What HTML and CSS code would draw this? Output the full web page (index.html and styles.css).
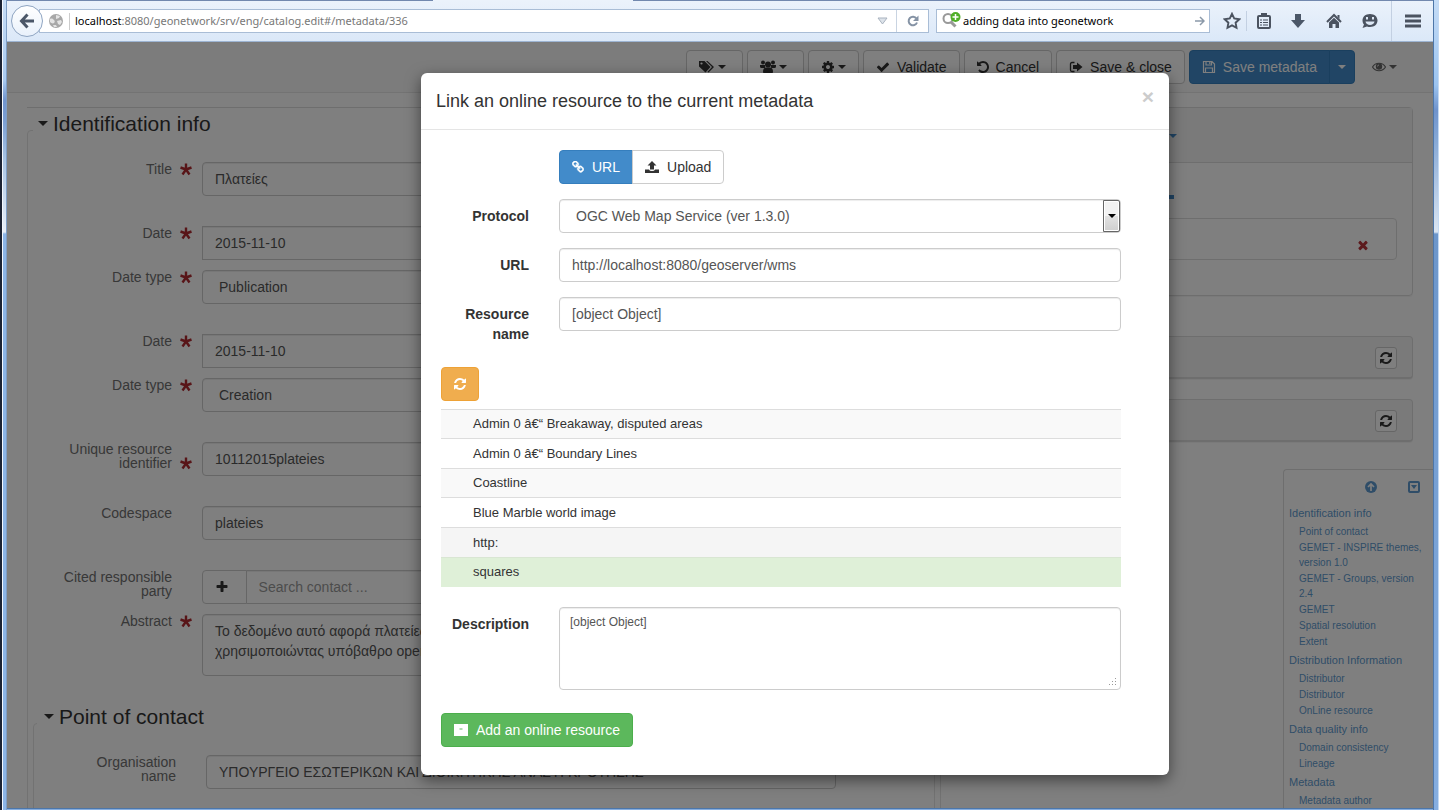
FILE: index.html
```html
<!DOCTYPE html>
<html lang="en">
<head>
<meta charset="utf-8">
<title>Edit metadata</title>
<link rel="stylesheet" href="styles.css">
</head>
<body>
<svg class="sprite" aria-hidden="true">
  <symbol id="i-check" viewBox="0 0 1792 1792"><path d="M1671 566q0 40-28 68l-724 724-136 136q-28 28-68 28t-68-28l-136-136-362-362q-28-28-28-68t28-68l136-136q28-28 68-28t68 28l294 295 656-657q28-28 68-28t68 28l136 136q28 28 28 68z"/></symbol>
  <symbol id="i-times" viewBox="0 0 1792 1792"><path d="M1490 1322q0 40-28 68l-136 136q-28 28-68 28t-68-28l-294-294-294 294q-28 28-68 28t-68-28l-136-136q-28-28-28-68t28-68l294-294-294-294q-28-28-28-68t28-68l136-136q28-28 68-28t68 28l294 294 294-294q28-28 68-28t68 28l136 136q28 28 28 68t-28 68l-294 294 294 294q28 28 28 68z"/></symbol>
  <symbol id="i-refresh" viewBox="128 128 1536 1536"><path d="M1639 1056q0 5-1 7-64 268-268 434.5t-478 166.5q-146 0-282.5-55t-243.5-157l-129 129q-19 19-45 19t-45-19-19-45v-448q0-26 19-45t45-19h448q26 0 45 19t19 45-19 45l-137 137q71 66 161 102t187 36q134 0 250-65t186-179q11-17 53-117 8-23 30-23h192q13 0 22.5 9.5t9.5 22.5zm25-800v448q0 26-19 45t-45 19h-448q-26 0-45-19t-19-45 19-45l138-138q-148-137-349-137-134 0-250 65t-186 179q-11 17-53 117-8 23-30 23h-199q-13 0-22.5-9.5t-9.5-22.5v-7q65-268 270-434.5t480-166.5q146 0 284 55.5t245 156.5l130-129q19-19 45-19t45 19 19 45z"/></symbol>
  <symbol id="i-undo" viewBox="128 128 1536 1536"><path d="M1664 896q0 156-61 298t-164 245-245 164-298 61q-172 0-327-72.5t-264-204.5q-7-10-6.5-22.5t8.5-20.5l137-138q10-9 25-9 16 2 23 12 73 95 179 147t225 52q104 0 198.500-40.500t163.500-109.500 109.500-163.500 40.500-198.500-40.500-198.500-109.500-163.500-163.500-109.500-198.500-40.500q-98 0-188 35.500t-160 101.500l137 138q31 30 14 69-17 40-59 40h-448q-26 0-45-19t-19-45v-448q0-42 40-59 39-17 69 14l130 129q107-101 244.500-156.500t284.500-55.500q156 0 298 61t245 164 164 245 61 298z"/></symbol>
  <symbol id="i-plus" viewBox="0 0 1792 1792"><path d="M1600 736v192q0 40-28 68t-68 28h-416v416q0 40-28 68t-68 28h-192q-40 0-68-28t-28-68v-416h-416q-40 0-68-28t-28-68v-192q0-40 28-68t68-28h416v-416q0-40 28-68t68-28h192q40 0 68 28t28 68v416h416q40 0 68 28t28 68z"/></symbol>
  <symbol id="i-star" viewBox="0 0 14 14"><path d="M7 7.500V1.500M7 7.500 1.500 5.500M7 7.500l5.500-2M7 7.500l-3.500 5M7 7.500l3.500 5" fill="none" stroke="currentColor" stroke-width="2.400"/></symbol>
  <symbol id="i-cog" viewBox="0 0 1792 1792"><path d="M1152 896q0-106-75-181t-181-75-181 75-75 181 75 181 181 75 181-75 75-181zm512-109v222q0 12-8 23t-20 13l-185 28q-19 54-39 91 35 50 107 138 10 12 10 25t-9 23q-27 37-99 108t-94 71q-12 0-26-9l-138-108q-44 23-91 38-16 136-29 186-7 28-36 28h-222q-14 0-24.500-8.500t-11.500-21.500l-28-184q-49-16-90-37l-141 107q-10 9-25 9-14 0-25-11-126-114-165-168-7-10-7-23 0-12 8-23 15-21 51-66.500t54-70.500q-27-50-41-99l-183-27q-13-2-21-12.500t-8-23.500v-222q0-12 8-23t19-13l186-28q14-46 39-92-40-57-107-138-10-12-10-24 0-10 9-23 26-36 98.500-107.500t94.500-71.500q13 0 26 10l138 107q44-23 91-38 16-136 29-186 7-28 36-28h222q14 0 24.500 8.500t11.500 21.500l28 184q49 16 90 37l142-107q9-9 24-9 13 0 25 10 129 119 165 170 7 8 7 22 0 12-8 23-15 21-51 66.500t-54 70.500q26 50 41 98l183 28q13 2 21 12.500t8 23.500z"/></symbol>
  <symbol id="i-link" viewBox="64 64 1664 1664"><path d="M1520 1216q0-40-28-68l-208-208q-28-28-68-28-42 0-72 32 3 3 19 18.500t21.500 21.500 15 19 13 25.500 3.500 27.500q0 40-28 68t-68 28q-15 0-27.500-3.500t-25.500-13-19-15-21.500-21.500-18.500-19q-33 31-33 73 0 40 28 68l206 207q27 27 68 27 40 0 68-26l147-146q28-28 28-67zm-703-705q0-40-28-68l-206-207q-28-28-68-28-39 0-68 27l-147 146q-28 28-28 67 0 40 28 68l208 208q27 27 68 27 42 0 72-31-3-3-19-18.500t-21.500-21.500-15-19-13-25.500-3.500-27.500q0-40 28-68t68-28q15 0 27.500 3.500t25.500 13 19 15 21.500 21.500 18.500 19q33-31 33-73zm895 705q0 120-85 203l-147 146q-83 83-203 83-121 0-204-85l-206-207q-83-83-83-203 0-123 88-209l-88-88q-86 88-208 88-120 0-204-84l-208-208q-84-84-84-204t85-203l147-146q83-83 203-83 121 0 204 85l206 207q83 83 83 203 0 123-88 209l88 88q86-88 208-88 120 0 204 84l208 208q84 84 84 204z" stroke="currentColor" stroke-width="60"/></symbol>
</svg>

<div class="window">
  <div class="frame frame-left"></div>

  <header class="chrome">
    <div class="tabline"><span class="tab"></span></div>
    <button class="back" aria-label="Back">
      <svg width="16" height="16" viewBox="0 0 16 16" fill="none" stroke="#4b5768" stroke-width="3"><path d="M8.500 1.500 2.500 8l6 6.500M3 8h12"/></svg>
    </button>
    <div class="address">
      <svg class="globe" width="14" height="14" viewBox="0 0 14 14"><circle cx="7" cy="7" r="7" fill="#a8a8a8"/><path d="M1 5c2-1 3 0 4 1s1 2 0 3-3 0-4-1zM7 1l4 1-1 2-3 1zM8 7l4-1 1 2-2 3-2-1zM4 11l3 0 1 2-3 0z" fill="#e4e4e4"/></svg>
      <span class="rule"></span>
      <span class="url"><b>localhost</b>:8080/geonetwork/srv/eng/catalog.edit#/metadata/336</span>
      <svg width="11" height="8" viewBox="0 0 11 8"><path d="M1 1h9L5.500 7z" fill="#dde3ea" stroke="#a9b3bf"/></svg>
      <button class="reload" aria-label="Reload"><svg width="12" height="12" viewBox="0 0 12 12"><path d="M9.500 3.500A4.300 4.300 0 1 0 10 7.500" fill="none" stroke="#8593a5" stroke-width="2"/><path d="M6 6h5.500V.5z" fill="#8593a5"/></svg></button>
    </div>
    <div class="search">
      <svg width="19" height="18" viewBox="0 0 19 18"><circle cx="6" cy="6.500" r="4.500" fill="none" stroke="#999" stroke-width="2"/><path d="m9 10 4.500 4.500" stroke="#999" stroke-width="3"/><circle cx="13.500" cy="5" r="5" fill="#4fae27"/><path d="M13.500 2v6m-3-3h6" stroke="#fff" stroke-width="1.500"/></svg>
      <input type="text" aria-label="Search" value="adding data into geonetwork">
      <svg width="10" height="10" viewBox="0 0 10 10" fill="none" stroke="#8b99a9" stroke-width="1.500"><path d="M0 5h8M5 1l4 4-4 4"/></svg>
    </div>
    <nav class="tools" aria-label="Browser">
      <button aria-label="Bookmark"><svg width="18" height="18" viewBox="0 0 18 18"><path d="m9 1.800 2.200 4.700 5.100.7-3.700 3.500.9 5.100L9 13.300l-4.500 2.500.9-5.100L1.700 7.200l5.100-.7z" fill="none" stroke="#4b5360" stroke-width="1.900"/></svg></button>
      <button class="ruled" aria-label="Bookmarks list"><svg width="16" height="18" viewBox="0 0 16 18" fill="none" stroke="#4b5360" stroke-width="2"><rect x="2" y="4" width="12" height="12" rx="1"/><path d="M5 3h6" stroke-width="4"/><path d="M4 8h2m1 0h5M4 10.500h2m1 0h5M4 13h2m1 0h5" stroke-width="1.200"/></svg></button>
      <button aria-label="Downloads"><svg width="16" height="16" viewBox="0 0 16 16"><path d="M5 1h6v6h4l-7 8-7-8h4z" fill="#4b5768"/></svg></button>
      <button aria-label="Home"><svg width="16" height="16" viewBox="0 0 16 16"><path d="M1 9 8 2l7 7" fill="none" stroke="#4b5360" stroke-width="2"/><path d="M3 9.500 8 4.800l5 4.700V15H9.500v-4h-3v4H3zM11.500 2h2v4l-2-2z" fill="#4b5360"/></svg></button>
      <button aria-label="Chat"><svg width="18" height="16" viewBox="0 0 18 16"><path d="M9 1c4.500 0 7.500 2.800 7.500 6.500S13.500 14 9 14c-1 0-2 0-3-.5L1.500 15 3 11.500C2 10.500 1.500 9 1.500 7.500 1.500 3.800 4.500 1 9 1z" fill="#4b5360"/><path d="M6 4v2.500M12 4v2.500" stroke="#dde8f5" stroke-width="2"/><path d="M4.500 8.500h9c-.5 4.500-8.500 4.500-9 0z" fill="#dde8f5"/></svg></button>
      <button class="menu" aria-label="Menu"><svg width="16" height="14" viewBox="0 0 16 14"><path d="M0 2h16M0 7h16M0 12h16" stroke="#4b5360" stroke-width="3"/></svg></button>
    </nav>
  </header>

  <div class="frame frame-right"></div>

  <main class="viewport">
    <div class="toolbar">
      <button class="btn roomy" aria-label="Tags"><svg class="wide" viewBox="0 0 16 14"><path d="M0 1h5.500l6 6-5 5.500L0 6.500z"/><path d="M7 1h1.500l6.500 6-5.500 5.500-1-.8L13 7z"/><circle cx="2.500" cy="3.500" r="1.100" fill="#fff"/></svg><i class="caret"></i></button>
      <button class="btn roomy" aria-label="Groups"><svg class="wide" viewBox="0 0 16 14"><circle cx="3" cy="2.500" r="2"/><circle cx="13" cy="2.500" r="2"/><circle cx="8" cy="4.500" r="3"/><path d="M0 5h5l0 3H1.500Q0 8 0 6.500zM16 5h-5v3h3.500Q16 8 16 6.500zM3 12c0-3 1-4.500 3-4.500h4c2 0 3 1.500 3 4.500q0 2-2 2H5q-2 0-2-2z"/></svg><i class="caret"></i></button>
      <button class="btn" aria-label="Settings"><svg><use href="#i-cog"/></svg><i class="caret"></i></button>
      <button class="btn spaced"><svg><use href="#i-check"/></svg>Validate</button>
      <button class="btn spaced"><svg class="narrow"><use href="#i-undo"/></svg>Cancel</button>
      <button class="btn spaced"><svg viewBox="0 0 14 14"><path d="M5.500 2.500H3Q1.500 2.500 1.500 4v6Q1.500 11.500 3 11.500h2.500" fill="none" stroke="currentColor" stroke-width="1.300"/><path d="M4 5h4V2.500L13.500 7 8 11.500V9H4z"/></svg>Save &amp; close</button>
      <div class="group">
        <button class="btn primary spaced"><svg viewBox="0 0 14 14"><path fill="none" stroke="currentColor" stroke-width="1.200" d="M1.500 1.500h8.500l2.500 2.500v8.500h-11zM4 1.500V5h5.500V1.500M7.800 1.500V4M3.500 12.500V8h7v4.500"/></svg>Save metadata</button>
        <button class="btn primary split" aria-label="More save options"><i class="caret"></i></button>
      </div>
      <button class="btn bare" aria-label="View"><svg viewBox="0 0 14 14"><path d="M.5 7C3.500 2 10.500 2 13.500 7c-3 5-10 5-13 0z" fill="none" stroke="currentColor" stroke-width="1.200"/><circle cx="7" cy="6.500" r="3.200"/><path d="M5.500 6.500Q5.500 5 7 5" fill="none" stroke="#fff" stroke-width=".8"/></svg><i class="caret"></i></button>
    </div>

    <div class="page">
      <form class="editor">
        <fieldset>
          <legend><i class="caret big"></i>Identification info</legend>
          <div class="row"><label for="title">Title</label><svg class="req"><use href="#i-star"/></svg><input id="title" class="control" value="Πλατείες"></div>
          <div class="row apart"><label for="date1">Date</label><svg class="req"><use href="#i-star"/></svg><input id="date1" class="control square" value="2015-11-10"></div>
          <div class="row"><label for="type1">Date type</label><svg class="req"><use href="#i-star"/></svg><select id="type1" class="control"><option>Publication</option></select></div>
          <div class="row apart"><label for="date2">Date</label><svg class="req"><use href="#i-star"/></svg><input id="date2" class="control square" value="2015-11-10"></div>
          <div class="row"><label for="type2">Date type</label><svg class="req"><use href="#i-star"/></svg><select id="type2" class="control"><option>Creation</option></select></div>
          <div class="row apart"><label for="ident">Unique resource identifier</label><svg class="req second"><use href="#i-star"/></svg><input id="ident" class="control" value="10112015plateies"></div>
          <div class="row apart"><label for="space">Codespace</label><span></span><input id="space" class="control" value="plateies"></div>
          <div class="row apart"><label for="party">Cited responsible party</label><span></span><div class="addon"><button type="button" class="btn" aria-label="Add contact"><svg><use href="#i-plus"/></svg></button><input id="party" class="control" placeholder="Search contact ..."></div></div>
          <div class="row"><label for="abs">Abstract</label><svg class="req"><use href="#i-star"/></svg><textarea id="abs" class="control">Το δεδομένο αυτό αφορά πλατείες
χρησιμοποιώντας υπόβαθρο openstreetmap</textarea></div>
          <fieldset class="nested">
            <legend><i class="caret big"></i>Point of contact</legend>
            <div class="row"><label for="org">Organisation name</label><span></span><input id="org" class="control" value="ΥΠΟΥΡΓΕΙΟ ΕΣΩΤΕΡΙΚΩΝ ΚΑΙ ΔΙΟΙΚΗΤΙΚΗΣ ΑΝΑΣΥΓΚΡΟΤΗΣΗΣ"></div>
            <div class="row filler"></div>
          </fieldset>
        </fieldset>
      </form>

      <aside class="side">
        <section class="panel">
          <div class="panel-head"><i class="caret accent"></i></div>
          <div class="panel-body">
            <span class="dash"></span>
            <div class="resource"><button class="remove" aria-label="Remove"><svg><use href="#i-times"/></svg></button></div>
          </div>
        </section>
        <section class="panel slim"><button class="btn tiny" aria-label="Refresh"><svg class="narrow"><use href="#i-refresh"/></svg></button></section>
        <section class="panel slim"><button class="btn tiny" aria-label="Refresh"><svg class="narrow"><use href="#i-refresh"/></svg></button></section>
      </aside>
    </div>

    <nav class="toc" aria-label="Sections">
      <div class="toc-tools">
        <button aria-label="Top"><svg width="12" height="12" viewBox="0 0 12 12"><circle cx="6" cy="6" r="6" fill="currentColor"/><path d="M6 10V3M3 6l3-3 3 3" fill="none" stroke="#fff" stroke-width="1.700"/></svg></button>
        <button aria-label="Collapse"><svg width="12" height="12" viewBox="0 0 12 12"><rect x="1" y="1" width="10" height="10" rx="1" fill="none" stroke="currentColor" stroke-width="2"/><path d="M3 4h6L6 8z" fill="currentColor"/></svg></button>
      </div>
      <ul>
        <li><a href="#s1">Identification info</a>
          <ul><li><a href="#s2">Point of contact</a></li><li><a href="#s3">GEMET - INSPIRE themes, version 1.0</a></li><li><a href="#s4">GEMET - Groups, version 2.4</a></li><li><a href="#s5">GEMET</a></li><li><a href="#s6">Spatial resolution</a></li><li><a href="#s7">Extent</a></li></ul></li>
        <li><a href="#s8">Distribution Information</a>
          <ul><li><a href="#s9">Distributor</a></li><li><a href="#s10">Distributor</a></li><li><a href="#s11">OnLine resource</a></li></ul></li>
        <li><a href="#s12">Data quality info</a>
          <ul><li><a href="#s13">Domain consistency</a></li><li><a href="#s14">Lineage</a></li></ul></li>
        <li><a href="#s15">Metadata</a>
          <ul><li><a href="#s16">Metadata author</a></li></ul></li>
      </ul>
    </nav>

    <div class="backdrop">
      <div class="modal" role="dialog" aria-labelledby="dlg">
        <div class="modal-head">
          <h4 id="dlg">Link an online resource to the current metadata</h4>
          <button class="close" aria-label="Close">×</button>
        </div>
        <form class="modal-body">
          <div class="field"><span></span>
            <div class="group">
              <button type="button" class="btn primary spaced"><svg class="narrow"><use href="#i-link"/></svg>URL</button>
              <button type="button" class="btn spaced"><svg viewBox="0 0 14 14"><path d="M7 1l4.500 4.500H9V9.500H5V5.500H2.500zM0 9.500h4q.5 1.500 3 1.500t3-1.500h4V13H0z"/></svg>Upload</button>
            </div>
          </div>
          <div class="field"><label for="proto">Protocol</label>
            <div class="pick"><select id="proto" class="control"><option>OGC Web Map Service (ver 1.3.0)</option></select><span class="arrow"></span></div>
          </div>
          <div class="field"><label for="url">URL</label><input id="url" class="control" value="http://localhost:8080/geoserver/wms"></div>
          <div class="field"><label for="name">Resource name</label><input id="name" class="control" value="[object Object]"></div>
          <button type="button" class="btn warning" aria-label="Reload layers"><svg class="narrow"><use href="#i-refresh"/></svg></button>
          <table class="layers">
            <tbody>
              <tr><td>Admin 0 â€“ Breakaway, disputed areas</td></tr>
              <tr><td>Admin 0 â€“ Boundary Lines</td></tr>
              <tr><td>Coastline</td></tr>
              <tr><td>Blue Marble world image</td></tr>
              <tr class="hover"><td>http:</td></tr>
              <tr class="chosen"><td>squares</td></tr>
            </tbody>
          </table>
          <div class="field"><label for="desc">Description</label><textarea id="desc" class="control small">[object Object]</textarea></div>
          <button type="button" class="btn success spaced"><svg viewBox="0 0 14 14"><path fill-rule="evenodd" d="M0 1h14v12H0zM5.500 5.500v1h3v-1z"/></svg>Add an online resource</button>
        </form>
      </div>
    </div>
  </main>
  <div class="frame frame-bottom"></div>
</div>
</body>
</html>
```
FILE: styles.css
```css
* { box-sizing: border-box; }
body { margin: 0; font: 14px/20px "Liberation Sans", Arial, sans-serif; color: #333; }
button, input, select, textarea { font: inherit; color: inherit; margin: 0; }
button { cursor: pointer; }
.sprite { display: none; }

/* Window frame */
.window { display: grid; grid-template: 42px 1fr 2px / 7px 1fr 6px; height: 100vh; overflow: hidden; }
.frame-left { grid-area: 1 / 1 / 4 / 2; border-left: 2px solid #1b2233; border-right: 1px solid #7f9dc4; box-shadow: inset 1px 0 #f4f8fe; background: linear-gradient(#c5dcf6, #a9caf0 80px, #7195cf 100px, #7a9ed3 120px, #a8c4e4 160px, #e9eff8 232px, #8cb5e7 234px); }
.frame-right { grid-area: 1 / 3 / 4 / 4; border-left: 1px solid #4d76a8; border-right: 1px solid #c3d9f3; background: linear-gradient(#c5dcf6, #9cc4f0 85px, #6f93cc 110px, #86a8d5 140px, #dce6f2 232px, #6d96ca 234px, #86aee0); }
.frame-bottom { grid-area: 3 / 2; background: #86aee0; border-top: 1px solid #4d76a8; }

/* Browser bar */
.chrome { grid-area: 1 / 2; position: relative; display: flex; align-items: center; padding: 1px 12px 0 4px; font: 11px/16px "Noto Sans", sans-serif; color: #000; background: linear-gradient(#ebf2fb, #dbe8f8); border-bottom: 1px solid #9db4d2; }
.tabline { position: absolute; inset: 0 0 auto; height: 1px; background: #7288ae; display: flex; }
.tab { margin-left: 426px; width: 200px; background: #ebf2fb; }
.chrome button { border: 0; background: none; padding: 0; display: flex; align-items: center; justify-content: center; }
.chrome .back { width: 32px; height: 32px; border: 1px solid #8fa5c2; border-radius: 50%; background: linear-gradient(#fff, #e9f1fb); z-index: 1; }
.address { flex: 1; display: flex; align-items: center; height: 24px; margin-left: -4px; padding-left: 9px; background: #fff; border: 1px solid #a9bdd6; }
.rule { width: 1px; height: 17px; margin: 0 5px 0 6px; background: #ccc; }
.url { flex: 1; color: #777; }
.url b { font-weight: 400; color: #000; }
.reload { width: 32px; height: 22px; margin-left: 8px; }
.chrome .reload { border-left: 1px solid #c9d4e2; }
.search { width: 274px; height: 24px; display: flex; align-items: center; margin-left: 7px; padding: 0 4px 0 5px; background: #fff; border: 1px solid #a9bdd6; }
.search input { flex: 1; min-width: 0; border: 0; padding: 0 0 0 2px; background: none; outline: 0; }
.tools { display: flex; align-items: center; margin-left: 12px; }
.tools button { width: 36px; height: 20px; }
.tools button:first-child { width: 20px; }
.tools .ruled { border-left: 1px solid #c3d0e2; margin-left: 4px; width: 34px; }
.tools .menu { height: 40px; width: 30px; margin-left: 3px; padding-left: 12px; border-left: 1px solid #c3d0e2; }

/* Shared controls */
.btn { display: inline-flex; align-items: center; height: 34px; padding: 0 12px; border: 1px solid #ccc; border-radius: 4px; background: #fff; white-space: nowrap; }
.btn svg, .remove svg, .req { width: 14px; height: 14px; fill: currentColor; flex: none; }
.btn svg.wide { width: 16px; }
.btn svg.narrow { width: 12px; height: 12px; }
.btn.roomy { padding-right: 16px; }
.spaced { gap: 8px; }
.caret { width: 0; height: 0; border: 4px solid transparent; border-top-color: currentColor; border-bottom: 0; margin-left: 3px; }
.caret.big { display: inline-block; border-width: 5px; border-bottom: 0; margin: 0 5px 5px 0; }
.primary { background: #428bca; border-color: #357ebd; color: #fff; }
.group { display: flex; }
.group .btn:first-child { border-radius: 4px 0 0 4px; }
.group .btn:last-child { border-radius: 0 4px 4px 0; margin-left: -1px; }
.split { padding: 0 8px; }
.split .caret { margin: 0; }
.control { display: block; width: 100%; height: 34px; padding: 6px 12px; border: 1px solid #ccc; border-radius: 4px; background: #fff; color: #555; box-shadow: inset 0 1px 1px rgba(0, 0, 0, .075); outline: 0; }
select.control { appearance: none; padding-left: 16px; }
.square { border-radius: 0; }

/* Page */
.viewport { grid-area: 2 / 2; position: relative; overflow: hidden; background: #fff; }
.toolbar { display: flex; justify-content: flex-end; gap: 4px; padding: 8px 23px 8px 0; background: #f8f8f8; border-bottom: 1px solid #e7e7e7; }
.toolbar .spaced { gap: 7px; }
.toolbar .bare { border-color: transparent; background: none; color: #666; }
.page { display: grid; grid-template-columns: 2fr 1fr; gap: 15px; margin-top: 14px; padding: 0 20px; }
.editor { border-top: 1px solid #ddd; padding-top: 1px; }
fieldset { min-width: 0; margin: 0; padding: 0 5px; border: 1px solid #e5e5e5; border-radius: 4px; }
legend { width: 100%; padding: 0 0 12px 5px; margin-bottom: 11px; font-size: 21px; line-height: 30px; }
.nested { margin-top: 26px; padding: 0 3px; }
.nested legend { padding-left: 7px; }
.row { display: grid; grid-template-columns: 139px 30px 1fr; margin-bottom: 10px; padding-right: 95px; align-items: start; }
.row.apart { margin-top: 30px; }
.row label { padding-left: 26px; line-height: 14px; text-align: right; color: #707070; }
.req { color: #b02a30; margin: 0 0 0 7px; }
.req.second { margin-top: 14px; }
.row textarea { height: 62px; resize: none; overflow: hidden; }
.addon { display: flex; }
.addon .btn { width: 46px; border-radius: 4px 0 0 4px; margin-right: -1px; }
.addon .control { border-radius: 0 4px 4px 0; }
.addon .control::placeholder { color: #999; }
.filler { height: 60px; }

.panel { border: 1px solid #ddd; border-radius: 4px; box-shadow: 0 1px 1px rgba(0, 0, 0, .05); margin-bottom: 40px; }
.panel-head { height: 55px; padding: 26px 0 0 209px; background: #f5f5f5; border-bottom: 1px solid #ddd; }
.accent { display: block; color: #428bca; }
.panel-body { padding: 32px 15px 35px; }
.dash { display: block; width: 15px; height: 4px; margin: 0 0 19px 187px; background: #428bca; }
.resource { display: flex; justify-content: flex-end; align-items: center; height: 42px; padding: 12px 26px 0 0; border: 1px solid #ddd; border-radius: 4px; }
.remove { display: flex; padding: 0; border: 0; background: none; color: #b8343a; }
.slim { display: flex; justify-content: flex-end; padding: 10px 15px 8px; background: #f5f5f5; border-bottom-width: 2px; margin-bottom: 20px; }
.btn.tiny { height: 22px; padding: 0 4px; border-radius: 3px; }

.toc { position: absolute; right: 0; top: 427px; bottom: 0; width: 150px; padding: 0 5px; overflow: hidden; border: 1px solid #ddd; border-width: 1px 0 0 1px; border-radius: 4px 0 0; background: #fff; color: #5f9bd0; font-size: 11px; line-height: 15px; }
.toc-tools { display: flex; justify-content: flex-end; gap: 31px; padding: 11px 8px 13px 0; }
.toc-tools button { display: flex; padding: 0; border: 0; background: none; color: #5f9bd0; }
.toc ul { list-style: none; margin: 0; padding: 0; }
.toc a { color: inherit; text-decoration: none; }
.toc > ul > li { margin-bottom: 4px; }
.toc ul ul { margin-top: 3px; padding-left: 10px; font-size: 10px; }
.toc ul ul li { margin-bottom: 1px; }

/* Dialog */
.backdrop { position: absolute; inset: 0; display: flex; align-items: flex-start; padding: 31px 264px 34px 414px; background: rgba(0, 0, 0, .5); }
.modal { flex: 1; background: #fff; border-radius: 6px; box-shadow: 0 5px 15px rgba(0, 0, 0, .5); }
.modal-head { display: flex; justify-content: space-between; align-items: flex-start; padding: 16px 15px; border-bottom: 1px solid #e5e5e5; }
.modal-head h4 { margin: 0; font-size: 18px; line-height: 24px; font-weight: 400; }
.close { padding: 0; border: 0; background: none; font-size: 21px; line-height: 16px; font-weight: 700; color: #ccc; }
.modal-body { padding: 20px 48px 28px 20px; }
.field { display: grid; grid-template-columns: 88px 1fr; column-gap: 30px; align-items: start; margin-bottom: 15px; }
.field label { padding-top: 7px; text-align: right; font-weight: 700; }
.pick { position: relative; }
.arrow { position: absolute; top: 1px; right: 1px; bottom: 1px; width: 17px; border: 1px solid #666; border-radius: 0 2px 2px 0; box-shadow: inset 0 0 0 1px #fff; background: linear-gradient(#f2f2f2 50%, #e2e2e2 50%, #cfcfcf); pointer-events: none; display: flex; align-items: center; justify-content: center; }
.arrow::after { content: ""; border: 4px solid transparent; border-top-color: #000; border-bottom: 0; }
.warning { margin: 8px 0; background: #f0ad4e; border-color: #eea236; color: #fff; }
.layers { width: 100%; margin-bottom: 20px; border-collapse: collapse; font-size: 13px; line-height: 18px; }
.layers tr { height: 29px; }
.layers tr:nth-child(even) { height: 30px; }
.layers tr:nth-child(odd) { background: #f9f9f9; }
.layers td { padding: 0 0 0 32px; border-top: 1px solid #ddd; }
.layers tr.hover { height: 30px; background: #f5f5f5; }
.layers tr.chosen { height: 29px; background: #dff0d8; }
.layers .chosen td { border-color: #d9e6d3; }
.small { height: 83px; padding: 5px 10px; font-size: 12px; line-height: 18px; resize: both; }
.small::-webkit-resizer { background: url("data:image/svg+xml,%3Csvg xmlns='http://www.w3.org/2000/svg' width='15' height='15'%3E%3Cpath fill='%23999' d='M10 4h1v1h-1zM7 7h1v1H7zM10 7h1v1h-1zM4 10h1v1H4zM7 10h1v1H7zM10 10h1v1h-1z'/%3E%3C/svg%3E"); }
.success { margin-top: 8px; background: #5cb85c; border-color: #4cae4c; color: #fff; }
```
